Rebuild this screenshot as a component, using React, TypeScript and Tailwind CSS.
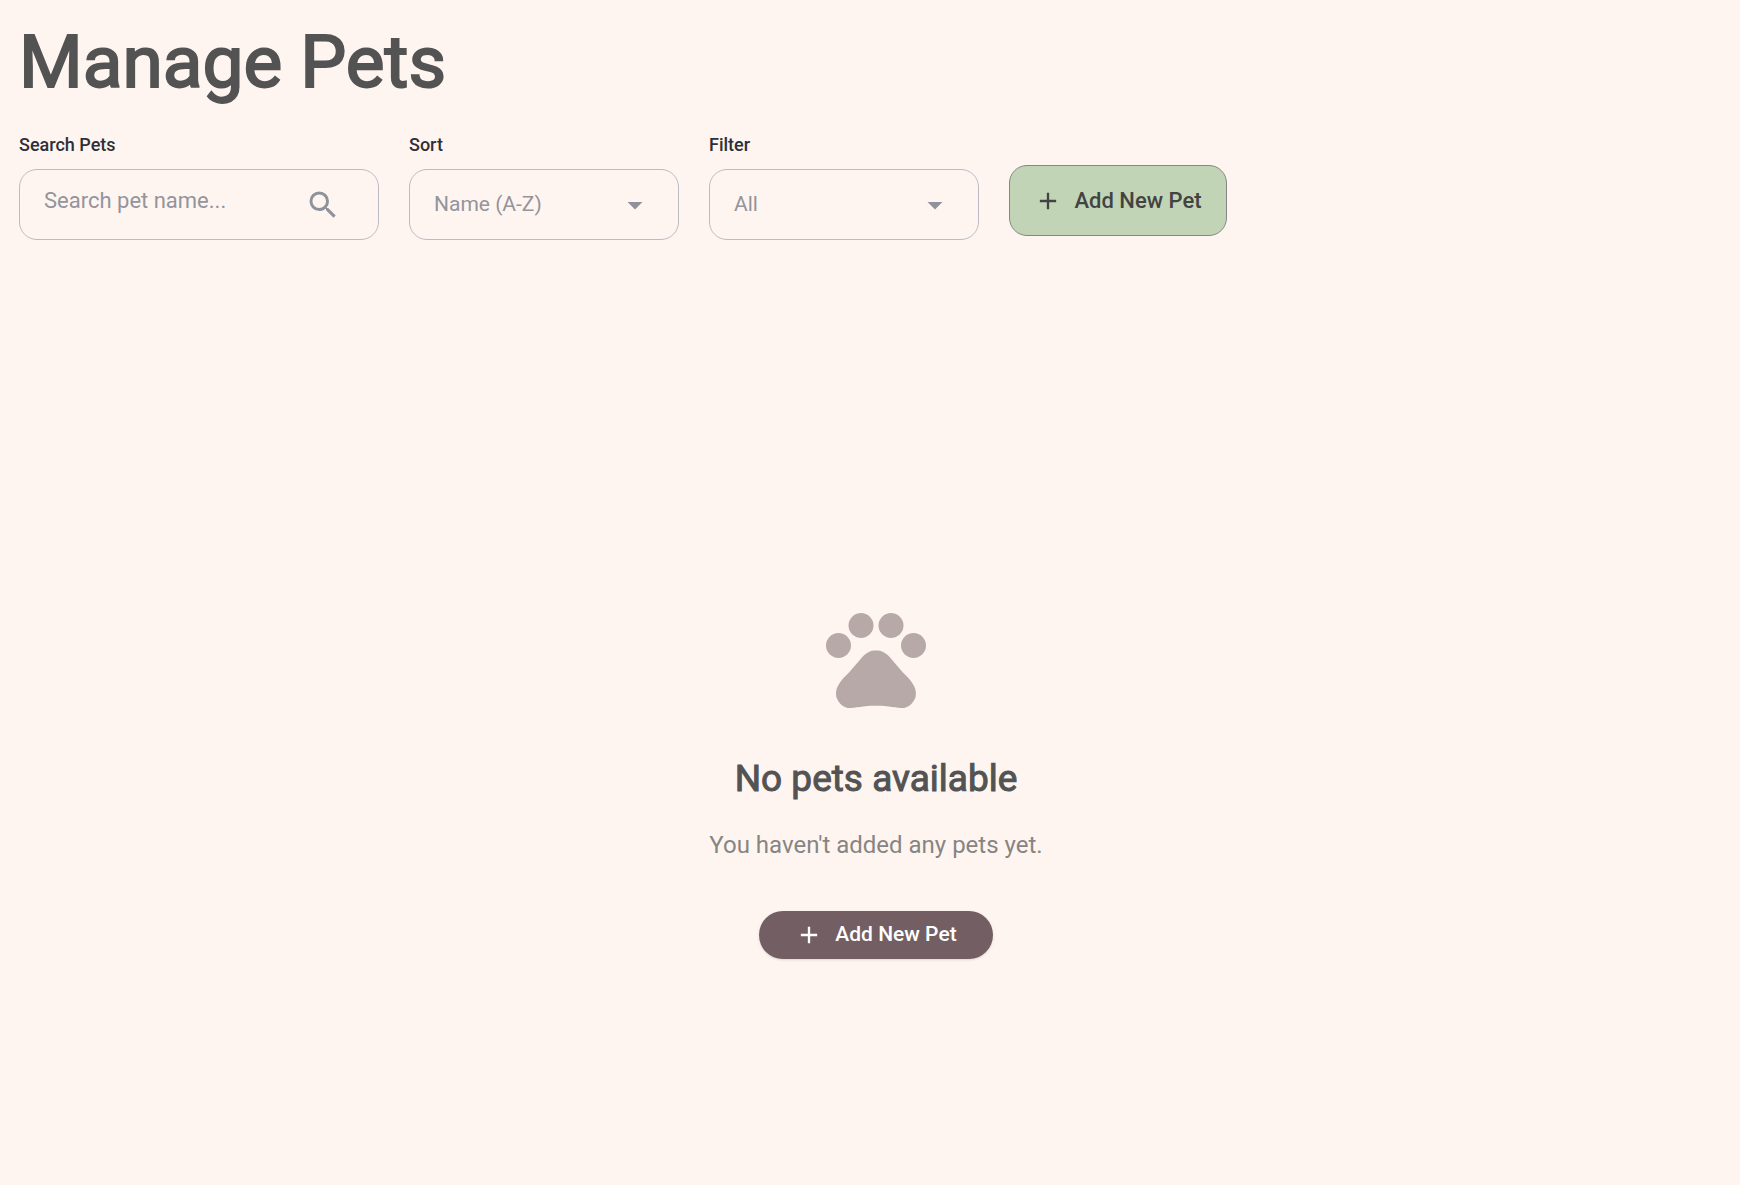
import type { ReactNode } from "react";
import { MdAdd, MdArrowDropDown, MdPets, MdSearch } from "react-icons/md";

function Field({ id, label, className, children }: { id: string; label: string; className: string; children: ReactNode }) {
  return (
    <div className={className}>
      <label htmlFor={id} className="block text-lg leading-6 font-medium text-[#2d3038]">
        {label}
      </label>
      <div className="mt-3 flex h-[71px] items-center rounded-[18px] border border-[#b9bcc5] focus-within:border-[#735f63]">
        {children}
      </div>
    </div>
  );
}

function SelectField({ id, label, options }: { id: string; label: string; options: string[] }) {
  return (
    <Field id={id} label={label} className="w-[270px]">
      <div className="relative h-full w-full">
        <select
          id={id}
          className="h-full w-full appearance-none bg-transparent pr-16 pl-6 text-[21px] text-[#93949c] outline-none"
        >
          {options.map((option) => (
            <option key={option}>{option}</option>
          ))}
        </select>
        <MdArrowDropDown className="pointer-events-none absolute inset-y-0 right-[25px] my-auto size-[36px] text-[#90929b]" />
      </div>
    </Field>
  );
}

export default function App() {
  return (
    <div className="flex min-h-screen flex-col bg-[#fff5f0] px-[19px] font-[Roboto,sans-serif]">
      <h1 className="pt-[18px] text-[73px] leading-[88px] font-normal text-[#535353] [-webkit-text-stroke:2px_#535353]">
        Manage Pets
      </h1>

      <div className="mt-[27px] flex flex-wrap items-end gap-[30px]">
        <Field id="search" label="Search Pets" className="w-[360px]">
          <input
            id="search"
            type="text"
            placeholder="Search pet name..."
            className="h-full min-w-0 flex-1 bg-transparent pb-2 pl-6 text-[22px] text-[#2d3038] outline-none placeholder:text-[#93949c]"
          />
          <button type="button" aria-label="Search" className="mr-[37px]">
            <MdSearch className="size-[36px] text-[#90929b]" />
          </button>
        </Field>
        <SelectField id="sort" label="Sort" options={["Name (A-Z)", "Name (Z-A)"]} />
        <SelectField id="filter" label="Filter" options={["All"]} />
        <button
          type="button"
          className="mb-1 flex h-[71px] w-[218px] items-center justify-center gap-3 rounded-[18px] border border-[#868686] bg-[#c1d5b6] text-[22px] font-medium text-[#434343]"
        >
          <MdAdd className="size-[28px]" />
          Add New Pet
        </button>
      </div>

      <main className="flex flex-1 flex-col items-center pt-[358px] pb-20 pl-3">
        <MdPets className="size-[120px] text-[#b8a9a9]" />
        <h2 className="mt-[39px] text-[37px] leading-[44px] font-normal text-[#535353] [-webkit-text-stroke:1px_#535353]">
          No pets available
        </h2>
        <p className="mt-7 text-2xl leading-8 text-[#868583]">You haven't added any pets yet.</p>
        <button
          type="button"
          className="mt-[50px] flex h-12 w-[234px] items-center justify-center gap-3 rounded-full bg-[#735f63] text-[21px] font-medium text-white shadow-sm"
        >
          <MdAdd className="size-[28px]" />
          Add New Pet
        </button>
      </main>
    </div>
  );
}
